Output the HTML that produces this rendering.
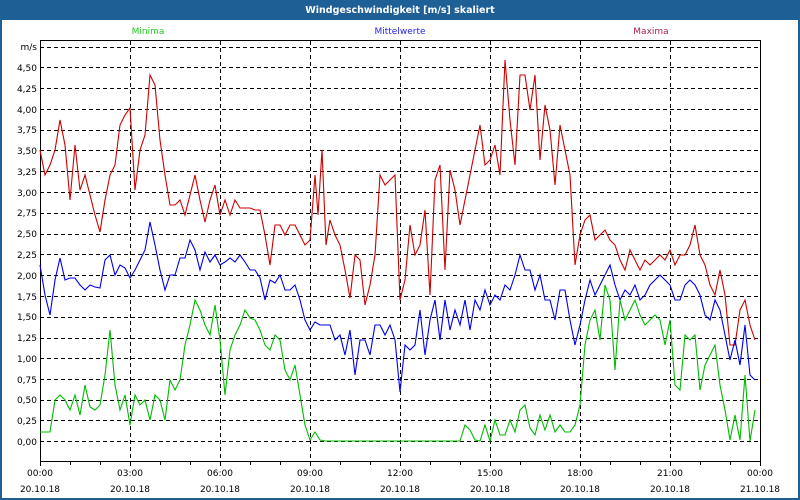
<!DOCTYPE html>
<html><head><meta charset="utf-8"><style>
html,body{margin:0;padding:0;width:800px;height:500px;overflow:hidden;background:#fff}
svg{display:block}
text{font-family:"DejaVu Sans","Liberation Sans",sans-serif;font-size:9px}
</style></head><body>
<svg width="800" height="500" viewBox="0 0 800 500">
<rect x="0" y="0" width="800" height="500" fill="#1e5f96"/>
<rect x="2" y="20" width="796" height="478" fill="#fff"/>
<text x="400" y="13" text-anchor="middle" fill="#fff" font-weight="bold" style="font-size:9.5px">Windgeschwindigkeit [m/s] skaliert</text>
<text x="148" y="34" text-anchor="middle" fill="#22cc22">Minima</text>
<text x="400" y="34" text-anchor="middle" fill="#2222ee">Mittelwerte</text>
<text x="651" y="34" text-anchor="middle" fill="#aa2255">Maxima</text>
<g stroke="#000" stroke-width="1" stroke-dasharray="4,3" fill="none">
<path d="M40 47.5H760M40 67.5H760M40 88.5H760M40 109.5H760M40 130.5H760M40 150.5H760M40 171.5H760M40 192.5H760M40 213.5H760M40 234.5H760M40 254.5H760M40 275.5H760M40 296.5H760M40 317.5H760M40 338.5H760M40 358.5H760M40 379.5H760M40 400.5H760M40 420.5H760M40 441.5H760"/>
<path d="M130.5 41V461M220.5 41V461M310.5 41V461M400.5 41V461M490.5 41V461M580.5 41V461M670.5 41V461"/>
</g>
<rect x="40.5" y="40.5" width="720" height="421" fill="none" stroke="#000"/>
<g stroke="#000"><path d="M40.5 461v5M70.5 461v4M100.5 461v4M130.5 461v5M160.5 461v4M190.5 461v4M220.5 461v5M250.5 461v4M280.5 461v4M310.5 461v5M340.5 461v4M370.5 461v4M400.5 461v5M430.5 461v4M460.5 461v4M490.5 461v5M520.5 461v4M550.5 461v4M580.5 461v5M610.5 461v4M640.5 461v4M670.5 461v5M700.5 461v4M730.5 461v4M760.5 461v5"/></g>
<g text-anchor="end" fill="#000">
<text x="37" y="50">m/s</text><text x="37" y="71">4,50</text><text x="37" y="92">4,25</text><text x="37" y="113">4,00</text><text x="37" y="133">3,75</text><text x="37" y="154">3,50</text><text x="37" y="175">3,25</text><text x="37" y="196">3,00</text><text x="37" y="216">2,75</text><text x="37" y="237">2,50</text><text x="37" y="258">2,25</text><text x="37" y="279">2,00</text><text x="37" y="300">1,75</text><text x="37" y="320">1,50</text><text x="37" y="341">1,25</text><text x="37" y="362">1,00</text><text x="37" y="383">0,75</text><text x="37" y="403">0,50</text><text x="37" y="424">0,25</text><text x="37" y="445">0,00</text>
</g>
<g text-anchor="middle" fill="#000">
<text x="40" y="476">00:00</text><text x="130" y="476">03:00</text><text x="220" y="476">06:00</text><text x="310" y="476">09:00</text><text x="400" y="476">12:00</text><text x="490" y="476">15:00</text><text x="580" y="476">18:00</text><text x="670" y="476">21:00</text><text x="760" y="476">00:00</text>
<text x="40" y="492">20.10.18</text><text x="130" y="492">20.10.18</text><text x="220" y="492">20.10.18</text><text x="310" y="492">20.10.18</text><text x="400" y="492">20.10.18</text><text x="490" y="492">20.10.18</text><text x="580" y="492">20.10.18</text><text x="670" y="492">20.10.18</text><text x="760" y="492">21.10.18</text>
</g>
<g fill="none" stroke-width="1.1">
<polyline stroke="#cc0000" points="40,150 45,175 50,165 55,150 60,120 65,145 70,200 75,145 80,190 85,175 90,195 95,215 100,232 105,200 110,175 115,165 120,125 125,115 130,108 135,190 140,150 145,135 150,75 155,85 160,140 165,175 170,205 175,205 180,200 185,215 190,195 195,175 200,200 205,222 210,200 215,185 220,215 225,200 230,215 235,200 240,208 245,208 250,208 255,210 260,210 265,235 270,265 275,225 280,225 285,235 290,225 295,225 300,235 305,245 310,240 315,175 318,215 322,150 326,245 330,220 335,235 340,245 345,270 350,298 355,255 360,260 365,305 370,285 375,255 380,175 385,185 390,180 395,175 400,300 405,280 410,225 415,255 420,245 425,210 430,295 435,180 440,165 445,270 450,170 455,190 460,225 465,200 470,175 475,150 480,125 485,165 490,160 495,145 500,175 505,60 510,120 515,165 520,75 525,75 530,110 535,75 540,160 545,105 550,130 555,185 560,125 565,150 570,175 575,265 580,235 585,220 590,215 595,240 600,235 605,230 610,240 615,245 620,260 625,270 630,250 635,260 640,270 645,260 650,265 655,260 660,255 665,260 670,250 675,265 680,255 685,255 690,245 695,225 700,255 705,265 710,285 715,295 720,270 725,295 730,345 735,345 740,310 745,300 750,325 755,340"/>
<polyline stroke="#0000ee" points="40,265 45,295 50,315 55,280 60,258 65,280 70,278 75,278 80,285 85,290 90,285 95,287 100,288 105,260 110,255 115,275 120,265 125,268 130,278 135,270 140,260 145,250 150,222 155,245 160,270 165,290 170,275 175,275 180,258 185,258 190,240 195,250 200,270 205,252 210,262 215,255 220,265 225,262 230,258 235,262 240,255 245,262 250,270 255,270 260,278 265,300 270,280 275,283 280,275 285,290 290,290 295,285 300,300 305,320 310,330 315,322 320,325 325,325 330,325 335,340 340,335 345,355 350,330 355,375 360,340 365,340 370,355 375,325 380,325 385,335 390,325 395,340 400,392 405,345 410,350 415,345 420,310 425,355 430,320 435,300 440,340 445,300 450,330 455,310 460,325 465,300 470,330 475,300 480,310 485,290 490,305 495,295 500,300 505,285 510,290 515,275 520,255 525,270 530,270 535,290 540,275 545,300 550,300 555,320 560,290 565,290 570,320 575,345 580,325 585,300 590,280 595,295 600,285 605,275 610,265 615,285 620,300 625,290 630,295 635,285 640,300 645,295 650,285 655,280 660,275 665,280 670,285 675,300 680,300 685,285 690,280 695,285 700,295 705,315 710,320 715,300 720,310 725,335 730,360 735,340 740,365 745,325 750,375 755,380"/>
<polyline stroke="#00bb00" points="40,432 45,432 50,432 55,400 60,395 65,400 70,410 75,395 80,415 85,385 90,407 95,410 100,405 105,375 110,330 115,385 120,410 125,395 130,425 135,395 140,405 145,400 150,420 155,395 160,400 165,420 170,380 175,390 180,380 185,345 190,325 195,300 200,310 205,325 210,335 215,305 220,340 225,395 230,350 235,335 240,325 245,310 250,318 255,320 260,330 265,345 270,350 275,335 280,340 285,370 290,380 295,365 300,395 305,425 310,440 315,432 320,440 325,441 460,441 465,425 470,430 475,440 480,441 485,425 490,441 495,420 500,435 505,435 510,420 515,432 520,410 525,405 530,428 535,435 540,415 545,430 550,415 555,432 560,425 565,432 570,432 575,425 580,405 585,345 590,320 595,310 600,340 605,285 610,300 615,370 620,300 625,320 630,310 635,300 640,315 645,325 650,320 655,315 660,320 665,345 670,320 675,385 680,390 685,335 690,340 695,335 700,390 705,365 710,355 715,345 720,385 725,410 730,440 735,415 740,440 745,375 750,441 755,410"/>
</g>
</svg>
</body></html>
